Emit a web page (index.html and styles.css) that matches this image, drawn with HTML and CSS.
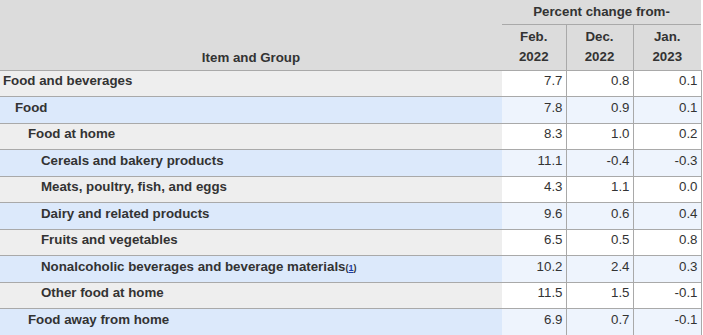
FILE: index.html
```html
<!DOCTYPE html>
<html>
<head>
<meta charset="utf-8">
<link rel="stylesheet" href="styles.css">
</head>
<body>
<table class="cpi">
  <colgroup>
    <col class="c-label">
    <col class="c-num1">
    <col class="c-num2">
    <col class="c-num3">
  </colgroup>
  <thead>
    <tr class="h1">
      <th class="item" rowspan="2">Item and Group</th>
      <th class="span" colspan="3">Percent change from-</th>
    </tr>
    <tr class="h2">
      <th class="per">Feb.<br>2022</th>
      <th class="per">Dec.<br>2022</th>
      <th class="per">Jan.<br>2023</th>
    </tr>
  </thead>
  <tbody>
    <tr class="odd"><th class="lbl l0">Food and beverages</th><td>7.7</td><td>0.8</td><td>0.1</td></tr>
    <tr class="even"><th class="lbl l1">Food</th><td>7.8</td><td>0.9</td><td>0.1</td></tr>
    <tr class="odd"><th class="lbl l2">Food at home</th><td>8.3</td><td>1.0</td><td>0.2</td></tr>
    <tr class="even"><th class="lbl l3">Cereals and bakery products</th><td>11.1</td><td>-0.4</td><td>-0.3</td></tr>
    <tr class="odd"><th class="lbl l3">Meats, poultry, fish, and eggs</th><td>4.3</td><td>1.1</td><td>0.0</td></tr>
    <tr class="even"><th class="lbl l3">Dairy and related products</th><td>9.6</td><td>0.6</td><td>0.4</td></tr>
    <tr class="odd"><th class="lbl l3">Fruits and vegetables</th><td>6.5</td><td>0.5</td><td>0.8</td></tr>
    <tr class="even"><th class="lbl l3">Nonalcoholic beverages and beverage materials<span class="fn">(<a href="#fn1">1</a>)</span></th><td>10.2</td><td>2.4</td><td>0.3</td></tr>
    <tr class="odd"><th class="lbl l3">Other food at home</th><td>11.5</td><td>1.5</td><td>-0.1</td></tr>
    <tr class="even"><th class="lbl l2">Food away from home</th><td>6.9</td><td>0.7</td><td>-0.1</td></tr>
  </tbody>
</table>
</body>
</html>
```
FILE: styles.css
```css
html, body {
  margin: 0;
  padding: 0;
  background: #ffffff;
}

.cpi {
  width: 701px;
  table-layout: fixed;
  border-collapse: collapse;
  font-family: "Liberation Sans", Arial, sans-serif;
  font-size: 13.3px;
  color: #333333;
}

.c-label { width: 502px; }
.c-num1 { width: 64px; }
.c-num2 { width: 67px; }
.c-num3 { width: 68px; }

thead th {
  background: #dcdcdc;
  font-weight: bold;
  color: #333333;
  padding: 0;
}

.h1 { height: 24px; }
.h2 { height: 46px; }

.item {
  text-align: center;
  vertical-align: bottom;
  padding-bottom: 5px;
  border-bottom: 1px solid #a9a9a9;
}

.span {
  text-align: center;
  vertical-align: middle;
  border-bottom: 1px solid #a9a9a9;
}

.per {
  text-align: center;
  line-height: 20px;
  vertical-align: middle;
  border-left: 1px solid #a9a9a9;
  border-bottom: 1px solid #a9a9a9;
}

.h2 .per:first-child {
  border-left: none;
}

tbody tr {
  height: 26.5px;
}

tbody th, tbody td {
  border-bottom: 1px solid #a9a9a9;
  padding: 0 0 5px 0;
  white-space: nowrap;
  vertical-align: middle;
}

.lbl {
  text-align: left;
  font-weight: bold;
}

.l0 { padding-left: 3px; }
.l1 { padding-left: 15px; }
.l2 { padding-left: 28px; }
.l3 { padding-left: 41px; }

tbody td {
  text-align: right;
  padding-right: 3px;
  border-right: 1px solid #a9a9a9;
}

.odd .lbl { background: #eeeeee; }
.odd td { background: #ffffff; }
.even .lbl { background: #dce9fb; }
.even td { background: #eef4fd; }

.fn {
  font-size: 9px;
}

.fn a {
  color: #1a3ca8;
  text-decoration: underline;
}
```
